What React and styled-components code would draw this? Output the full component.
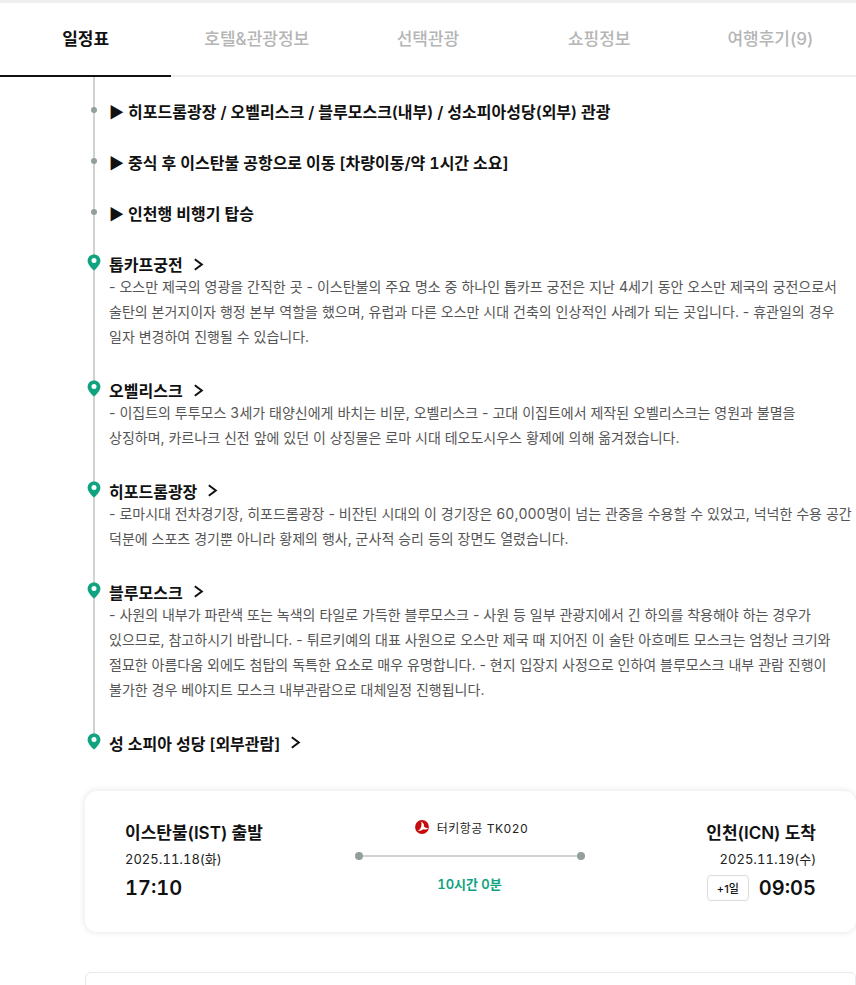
import React from 'react';
import styled, { createGlobalStyle } from 'styled-components';

const GlobalStyle = createGlobalStyle`
  html, body {
    margin: 0;
    padding: 0;
    background: #fff;
    overflow: hidden;
  }
  body {
    font-family: Inter, 'Noto Sans CJK KR', sans-serif;
    color: #111;
  }
`;

const tabs = ['일정표', '호텔&관광정보', '선택관광', '쇼핑정보', '여행후기(9)'];

const stops = [
  '▶ 히포드롬광장 / 오벨리스크 / 블루모스크(내부) / 성소피아성당(외부) 관광',
  '▶ 중식 후 이스탄불 공항으로 이동 [차량이동/약 1시간 소요]',
  '▶ 인천행 비행기 탑승',
];

const places = [
  {
    name: '톱카프궁전',
    lines: [
      '- 오스만 제국의 영광을 간직한 곳 - 이스탄불의 주요 명소 중 하나인 톱카프 궁전은 지난 4세기 동안 오스만 제국의 궁전으로서',
      '술탄의 본거지이자 행정 본부 역할을 했으며, 유럽과 다른 오스만 시대 건축의 인상적인 사례가 되는 곳입니다. - 휴관일의 경우',
      '일자 변경하여 진행될 수 있습니다.',
    ],
  },
  {
    name: '오벨리스크',
    lines: [
      '- 이집트의 투투모스 3세가 태양신에게 바치는 비문, 오벨리스크 - 고대 이집트에서 제작된 오벨리스크는 영원과 불멸을',
      '상징하며, 카르나크 신전 앞에 있던 이 상징물은 로마 시대 테오도시우스 황제에 의해 옮겨졌습니다.',
    ],
  },
  {
    name: '히포드롬광장',
    lines: [
      '- 로마시대 전차경기장, 히포드롬광장 - 비잔틴 시대의 이 경기장은 60,000명이 넘는 관중을 수용할 수 있었고, 넉넉한 수용 공간',
      '덕분에 스포츠 경기뿐 아니라 황제의 행사, 군사적 승리 등의 장면도 열렸습니다.',
    ],
  },
  {
    name: '블루모스크',
    lines: [
      '- 사원의 내부가 파란색 또는 녹색의 타일로 가득한 블루모스크 - 사원 등 일부 관광지에서 긴 하의를 착용해야 하는 경우가',
      '있으므로, 참고하시기 바랍니다. - 튀르키예의 대표 사원으로 오스만 제국 때 지어진 이 술탄 아흐메트 모스크는 엄청난 크기와',
      '절묘한 아름다움 외에도 첨탑의 독특한 요소로 매우 유명합니다. - 현지 입장지 사정으로 인하여 블루모스크 내부 관람 진행이',
      '불가한 경우 베야지트 모스크 내부관람으로 대체일정 진행됩니다.',
    ],
  },
  { name: '성 소피아 성당 [외부관람]', lines: [] },
];

const Page = styled.div`
  width: 856px;
  height: 985px;
  overflow: hidden;
  background: #fff;
`;

const TabBar = styled.nav`
  display: grid;
  grid-template-columns: repeat(5, 171.2px);
  height: 72px;
  border-top: 3px solid #eeeeee;
  border-bottom: 2px solid #eeeeee;
`;

const Tab = styled.div`
  display: flex;
  align-items: center;
  justify-content: center;
  height: 72px;
  padding-bottom: 4px;
  box-sizing: border-box;
  font-size: 17px;
  font-weight: ${(p) => (p.$active ? 700 : 500)};
  color: ${(p) => (p.$active ? '#111' : '#b5b5b5')};
  box-shadow: ${(p) => (p.$active ? '0 2px 0 #111' : 'none')};
`;

const Timeline = styled.div`
  margin: 0 0 0 93px;
  padding: 25px 0 0 14px;
  height: 640px;
  border-left: 2px solid #cfd4d3;
  white-space: nowrap;
`;

const Num = styled.span`
  font-variant-numeric: tabular-nums;
`;

const Stop = styled.div`
  position: relative;
  height: 20px;
  margin-bottom: 31px;
  line-height: 20px;
  font-size: 16px;
  font-weight: 600;
  color: #111;
  &::before {
    content: '';
    position: absolute;
    left: -18px;
    top: 5px;
    width: 6px;
    height: 6px;
    border-radius: 50%;
    background: #939f9c;
  }
`;

const Place = styled.div`
  position: relative;
  margin-bottom: 31.4px;
`;

const PinMark = styled.svg`
  position: absolute;
  left: -22px;
  top: 0;
  width: 14px;
  height: 17px;
`;

const PlaceName = styled.div`
  display: flex;
  align-items: center;
  gap: 10px;
  height: 20px;
  margin: -1px 0 1px;
  font-size: 16px;
  font-weight: 600;
  color: #111;
`;

const Desc = styled.p`
  margin: -1px 0 0;
  font-size: 14px;
  line-height: 25.2px;
  color: #555;
`;

const FlightCard = styled.section`
  display: grid;
  grid-template-columns: 229px 1fr 231px;
  margin: 49px 0 0 85px;
  width: 771px;
  height: 141px;
  box-sizing: border-box;
  padding: 30px 40px 0;
  background: #fff;
  border-radius: 12px;
  box-shadow: 0 0 7px rgba(0, 0, 0, 0.12);
`;

const Endpoint = styled.div`
  display: flex;
  flex-direction: column;
  align-items: ${(p) => (p.$right ? 'flex-end' : 'flex-start')};
`;

const City = styled.div`
  font-size: 17px;
  line-height: 24px;
  font-weight: 600;
  color: #111;
`;

const FlightDate = styled.div`
  margin-top: 4px;
  font-size: 13px;
  line-height: 20px;
  color: #222;
`;

const TimeRow = styled.div`
  display: flex;
  align-items: center;
  gap: 10px;
  margin-top: 5px;
`;

const Time = styled.div`
  font-size: 20px;
  line-height: 28px;
  font-weight: 600;
  font-variant-numeric: tabular-nums;
  color: #111;
`;

const DayBadge = styled.span`
  display: flex;
  align-items: center;
  justify-content: center;
  width: 42px;
  height: 26px;
  box-sizing: border-box;
  border: 1px solid #dcdcdc;
  border-radius: 4px;
  font-size: 11px;
  font-weight: 500;
`;

const Route = styled.div`
  display: flex;
  flex-direction: column;
  align-items: center;
`;

const Airline = styled.div`
  display: flex;
  align-items: center;
  gap: 8px;
  height: 16px;
  margin-top: -2px;
  padding-left: 4px;
  font-size: 12px;
  letter-spacing: 0.5px;
  color: #222;
`;

const RouteLine = styled.div`
  display: flex;
  align-items: center;
  width: 230px;
  margin-top: 17px;
  height: 8px;
  &::before,
  &::after {
    content: '';
    width: 8px;
    height: 8px;
    border-radius: 50%;
    background: #939f9c;
  }
`;

const RouteBar = styled.div`
  flex: 1;
  height: 2px;
  background: #cfd4d3;
`;

const Duration = styled.div`
  margin-top: 14px;
  font-size: 13px;
  font-weight: 600;
  color: #0fa37f;
`;

const NextCard = styled.div`
  margin: 40px 0 0 85px;
  height: 60px;
  border: 1px solid #e8e8ee;
  border-radius: 6px;
`;

// digits get tabular widths, the slashes, dots and hyphens around them do not
const withNums = (text) =>
  text.split(/(\d+)/).map((part, i) => (i % 2 ? <Num key={i}>{part}</Num> : part));

const Pin = () => (
  <PinMark viewBox="0 0 14 17">
    <path
      d="M7 0.5C3.4 0.5 0.6 3.2 0.6 6.7 0.6 10.6 4.6 14.3 7 16.5 9.4 14.3 13.4 10.6 13.4 6.7 13.4 3.2 10.6 0.5 7 0.5Z"
      fill="#0fa37f"
    />
    <circle cx="7" cy="6.6" r="2.5" fill="#fff" />
  </PinMark>
);

const Chevron = () => (
  <svg width="11" height="13" viewBox="0 0 11 13">
    <path d="M1.8 1.2 L8.8 6.5 L1.8 11.8" fill="none" stroke="#111" strokeWidth="2" />
  </svg>
);

const AirlineLogo = () => (
  <svg width="14" height="14" viewBox="0 0 15 15">
    <circle cx="7.5" cy="7.5" r="7.4" fill="#c70a0c" />
    <path
      d="M6.6 1.6C8.6 2.6 9.9 4.8 9.8 7.2 10.9 8.1 12.5 8.6 14.2 8.5 13 10 10.6 10.6 8.6 9.8 7.4 11.2 5.2 11.8 3.2 11.2 4.2 10.8 5.2 10 5.8 9 6.8 7.2 7.4 4 6.6 1.6Z"
      fill="#fff"
    />
  </svg>
);

const App = () => (
  <Page>
    <GlobalStyle />
    <TabBar>
      {tabs.map((tab, i) => (
        <Tab key={tab} $active={i === 0}>
          {tab}
        </Tab>
      ))}
    </TabBar>
    <Timeline>
      {stops.map((stop) => (
        <Stop key={stop}>{withNums(stop)}</Stop>
      ))}
      {places.map((place) => (
        <Place key={place.name}>
          <Pin />
          <PlaceName>
            {place.name}
            <Chevron />
          </PlaceName>
          {place.lines.length > 0 && (
            <Desc>
              {place.lines.map((line) => (
                <React.Fragment key={line}>
                  {withNums(line)}
                  <br />
                </React.Fragment>
              ))}
            </Desc>
          )}
        </Place>
      ))}
    </Timeline>
    <FlightCard>
      <Endpoint>
        <City>이스탄불(IST) 출발</City>
        <FlightDate>{withNums('2025.11.18(화)')}</FlightDate>
        <TimeRow>
          <Time>17:10</Time>
        </TimeRow>
      </Endpoint>
      <Route>
        <Airline>
          <AirlineLogo />
          <span>터키항공 TK{withNums('020')}</span>
        </Airline>
        <RouteLine>
          <RouteBar />
        </RouteLine>
        <Duration>{withNums('10시간 0분')}</Duration>
      </Route>
      <Endpoint $right>
        <City>인천(ICN) 도착</City>
        <FlightDate>{withNums('2025.11.19(수)')}</FlightDate>
        <TimeRow>
          <DayBadge>+1일</DayBadge>
          <Time>09:05</Time>
        </TimeRow>
      </Endpoint>
    </FlightCard>
    <NextCard />
  </Page>
);

export default App;
